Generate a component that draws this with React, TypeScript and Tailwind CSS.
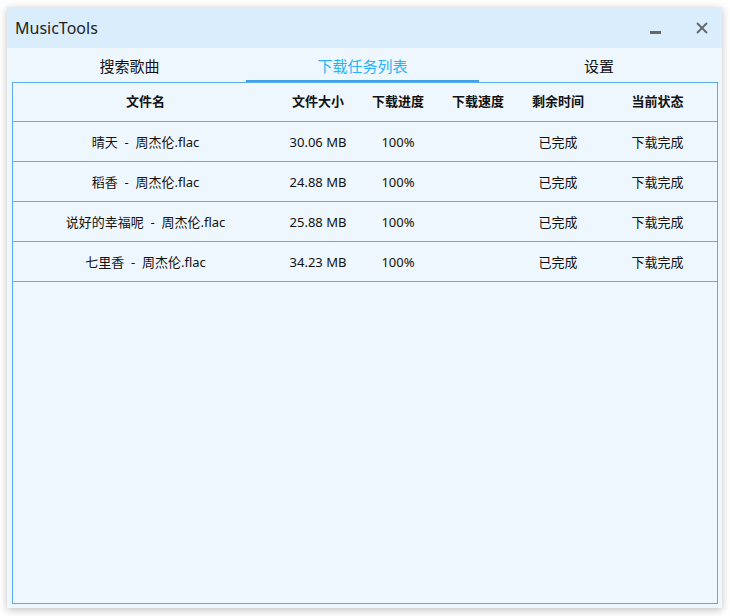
const rows = [
  { name: "晴天  -  周杰伦.flac", size: "30.06 MB" },
  { name: "稻香  -  周杰伦.flac", size: "24.88 MB" },
  { name: "说好的幸福呢  -  周杰伦.flac", size: "25.88 MB" },
  { name: "七里香  -  周杰伦.flac", size: "34.23 MB" },
];

const tabs = ["搜索歌曲", "下载任务列表", "设置"];

export default function App() {
  return (
    <div
      className="w-[730px] h-[616px] bg-white pt-[7px] pl-[7px]"
      style={{ fontFamily: '"Noto Sans", "Noto Sans CJK SC", sans-serif' }}
    >
      <div className="w-[715px] h-[601px] flex flex-col bg-[#eff7fe] shadow-[0_2px_8px_rgba(0,0,0,0.25)]">
        {/* title bar */}
        <div className="h-[41px] shrink-0 flex items-center bg-[#d9edfc] pl-[8px]">
          <span className="text-[16px] text-[#222]">MusicTools</span>
          <div className="ml-auto flex items-center">
            <div className="w-[11px] h-[3px] bg-[#666] mt-[9px] mr-[35px]" />
            <svg width="12" height="12" viewBox="0 0 12 12" className="mr-[14px] mt-[1px]">
              <path d="M1 1L11 11M11 1L1 11" stroke="#666" strokeWidth="1.8" />
            </svg>
          </div>
        </div>

        {/* tabs */}
        <div className="h-[34px] shrink-0 flex pl-[6px]">
          {tabs.map((t, i) => (
            <div
              key={t}
              className={
                i === 1
                  ? "w-[233px] flex items-center justify-center pt-[4px] text-[15px] text-[#29b3f4] border-b-2 border-[#3ea2ea]"
                  : i === 2
                    ? "w-[240px] flex items-center justify-center pt-[2px] text-[15px] text-[#111]"
                    : "w-[233px] flex items-center justify-center pt-[2px] text-[15px] text-[#111]"
              }
            >
              {t}
            </div>
          ))}
        </div>

        {/* table */}
        <div className="flex-1 mx-[5px] mb-[4px] mr-[4px] border border-[#5aaaee] text-[13px] text-[#111]">
          <div className="h-[39px] flex items-center border-b border-[#5aaaee] font-bold">
            <div className="w-[265px] text-center">文件名</div>
            <div className="w-[80px] text-center">文件大小</div>
            <div className="w-[80px] text-center">下载进度</div>
            <div className="w-[80px] text-center">下载速度</div>
            <div className="w-[80px] text-center">剩余时间</div>
            <div className="w-[119px] text-center">当前状态</div>
          </div>
          {rows.map((r) => (
            <div key={r.name} className="h-[40px] flex items-center pt-[2px] border-b border-[#5aaaee]">
              <div className="w-[265px] text-center whitespace-pre">{r.name}</div>
              <div className="w-[80px] text-center">{r.size}</div>
              <div className="w-[80px] text-center">100%</div>
              <div className="w-[80px] text-center"></div>
              <div className="w-[80px] text-center">已完成</div>
              <div className="w-[119px] text-center">下载完成</div>
            </div>
          ))}
        </div>
      </div>
    </div>
  );
}
